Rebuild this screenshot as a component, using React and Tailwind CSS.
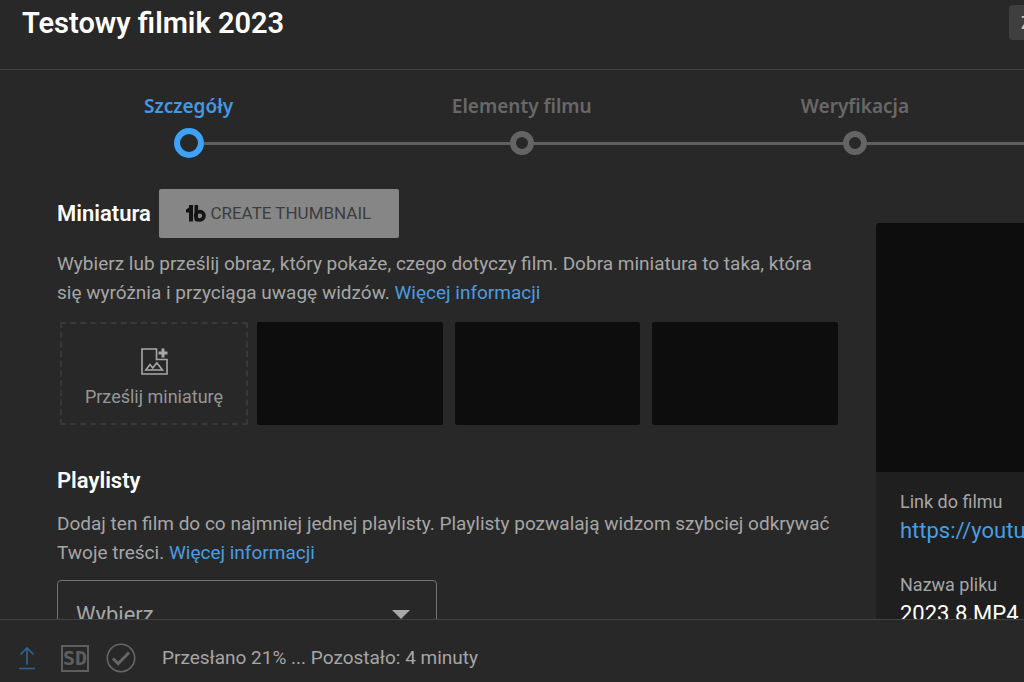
import * as React from "react"

const steps = [
    { label: "Szczegóły", active: true },
    { label: "Elementy filmu" },
    { label: "Weryfikacja" },
    { label: "Widoczność" },
]

const thumbnails = ["Miniatura 1", "Miniatura 2", "Miniatura 3"]

function ThumbnailLogo() {
    return (
        <svg width="20" height="17" viewBox="0 0 20 17" fill="none" aria-hidden="true">
            <path d="M0 4.600 3 2.600V0h4v16.500H3V7.600H0z" fill="#141414" />
            <path d="M8.500 0h3.600v16.500H11A2.500 2.500 0 0 1 8.500 14z" fill="#141414" />
            <circle cx="13.800" cy="10.800" r="4.200" stroke="#141414" strokeWidth="3.600" />
            <path d="M12 8.400 16 10.800 12 13.200z" fill="#868686" />
        </svg>
    )
}

function AddImageIcon() {
    return (
        <svg width="27" height="27" viewBox="0 0 27 27" fill="none" stroke="#a8a8a8" aria-hidden="true">
            <path d="M15.500 1H1V26H26V11.500H15.500z" strokeWidth="1.600" />
            <path d="M22 .5V9.500M17.500 5H26.500" strokeWidth="3" />
            <path d="M4.800 22 9 16.500 11.800 20 15.800 14.800 21.500 22z" strokeWidth="1.600" />
        </svg>
    )
}

function UploadIcon() {
    return (
        <svg width="18" height="24" viewBox="0 0 18 24" fill="none" stroke="#30648f" strokeWidth="1.700" aria-hidden="true">
            <path d="M9 18.500V2M2.500 8.500 9 2 15.500 8.500M1 22.500H17" />
        </svg>
    )
}

function CheckIcon() {
    return (
        <svg width="30" height="30" viewBox="0 0 30 30" fill="none" stroke="#666666" aria-hidden="true">
            <circle cx="15" cy="15" r="13.700" strokeWidth="1.600" />
            <path d="M7 15.500 12.200 20.700 23 9.500" strokeWidth="3" />
        </svg>
    )
}

function MoreLink() {
    return <a href="#help" className="text-[#4a9de0]">Więcej informacji</a>
}

function Stepper() {
    return (
        <nav aria-label="Etapy" className="overflow-hidden pl-[22px]">
            <ol className="flex w-[133%]">
                {steps.map((step, i) => (
                    <li key={step.label} className="flex flex-1 flex-col items-center">
                        <button
                            type="button"
                            className={`font-['Noto_Sans',sans-serif] text-[19px] leading-6 font-semibold ${step.active ? "text-[#4399e2]" : "text-[#686868]"}`}
                        >
                            {step.label}
                        </button>
                        <div className="mt-[9px] flex h-8 w-full items-center">
                            <span className={`h-[3px] flex-1 ${i > 0 ? "bg-[#606060]" : ""}`} />
                            <span
                                className={`rounded-full border-6 ${step.active ? "size-[30px] border-[#3ea2f9]" : "size-6 border-[#646464]"}`}
                            />
                            <span className={`h-[3px] flex-1 ${i < steps.length - 1 ? "bg-[#606060]" : ""}`} />
                        </div>
                    </li>
                ))}
            </ol>
        </nav>
    )
}

export default function App() {
    return (
        <div className="flex h-screen flex-col overflow-hidden bg-[#282828] font-[Roboto,sans-serif] text-[#a6a6a6]">

            {/* Header */}
            <header className="flex h-[70px] shrink-0 items-start justify-between overflow-hidden border-b border-[#424242] pt-[5px] pl-[22px]">
                <h1 className="text-[29px] leading-9 font-semibold text-white">Testowy filmik 2023</h1>
                <button
                    type="button"
                    className="h-[35px] w-[15px] overflow-hidden rounded-l bg-[#3f3f3f] pl-3 text-left text-lg font-medium whitespace-nowrap text-[#c4c4c4]"
                >
                    Zapisano
                </button>
            </header>

            {/* Form */}
            <main className="min-h-0 flex-1 overflow-hidden pt-6">
                <Stepper />

                <div className="flex gap-[38px] pt-[30px] pl-[57px]">
                    <div className="min-w-0 flex-1">
                        <div className="flex items-center gap-2">
                            <h2 className="text-[22px] font-semibold text-white">Miniatura</h2>
                            <button
                                type="button"
                                className="flex h-[49px] w-[240px] items-center justify-center gap-1 rounded-xs bg-[#868686] text-[17px] text-[#3c3c3c]"
                            >
                                <ThumbnailLogo />
                                CREATE THUMBNAIL
                            </button>
                        </div>

                        <p className="mt-[11px] text-[19px] leading-[29px]">
                            Wybierz lub prześlij obraz, który pokaże, czego dotyczy film. Dobra miniatura to taka, która
                            się wyróżnia i przyciąga uwagę widzów. <MoreLink />
                        </p>

                        <div className="mt-[15px] flex gap-[9px] pl-[3px]">
                            <button
                                type="button"
                                className="flex h-[103px] w-[188px] shrink-0 flex-col items-center justify-center gap-2 rounded-xs border-2 border-dashed border-[#383838] pt-3 text-lg text-[#969696]"
                            >
                                <AddImageIcon />
                                Prześlij miniaturę
                            </button>
                            <div className="flex flex-1 gap-3">
                                {thumbnails.map((name) => (
                                    <button key={name} type="button" aria-label={name} className="h-[103px] flex-1 rounded-xs bg-[#0d0d0d]" />
                                ))}
                            </div>
                        </div>

                        <h2 className="mt-[39px] text-[22px] leading-[34px] font-semibold text-white">Playlisty</h2>
                        <p className="mt-[11px] text-[19px] leading-[29px]">
                            Dodaj ten film do co najmniej jednej playlisty. Playlisty pozwalają widzom szybciej odkrywać
                            Twoje treści. <MoreLink />
                        </p>

                        <div className="relative mt-[13px] w-[380px]">
                            <select
                                aria-label="Playlisty"
                                className="h-[68px] w-full appearance-none rounded-sm border border-[#747474] bg-transparent px-[18px] text-[22px] text-[#a6a6a6]"
                            >
                                <option>Wybierz</option>
                            </select>
                            <svg width="18" height="9" viewBox="0 0 18 9" className="pointer-events-none absolute top-[30px] right-[27px]" aria-hidden="true">
                                <path d="M0 0H18L9 9z" fill="#a8a8a8" />
                            </svg>
                        </div>
                    </div>

                    {/* Video preview */}
                    <aside className="mt-[34px] w-[148px] shrink-0 overflow-hidden rounded-tl bg-[#1f1f1f] whitespace-nowrap">
                        <div className="h-[249px] bg-[#0d0d0d]" />
                        <dl className="pt-4 pl-6">
                            <dt className="text-lg leading-7">Link do filmu</dt>
                            <dd className="text-[22px] leading-[30px]">
                                <a href="#video" className="text-[#4a9de0]">https://youtu.be</a>
                            </dd>
                            <dt className="mt-[25px] text-lg leading-7">Nazwa pliku</dt>
                            <dd className="text-[22px] leading-[30px] text-white">2023 8.MP4</dd>
                        </dl>
                    </aside>
                </div>
            </main>

            {/* Upload status */}
            <footer className="flex h-[63px] shrink-0 items-center border-t border-[#424242] pt-[14px] pl-[18px]">
                <UploadIcon />
                <span className="ml-[25px] flex h-[27px] w-7 items-center justify-center border-2 border-[#5e5e5e] font-['DejaVu_Sans_Mono',monospace] text-xl font-bold text-[#5e5e5e]">
                    SD
                </span>
                <span className="ml-[17px]">
                    <CheckIcon />
                </span>
                <p className="ml-[26px] text-[19px]">Przesłano 21% ... Pozostało: 4 minuty</p>
            </footer>
        </div>
    )
}
